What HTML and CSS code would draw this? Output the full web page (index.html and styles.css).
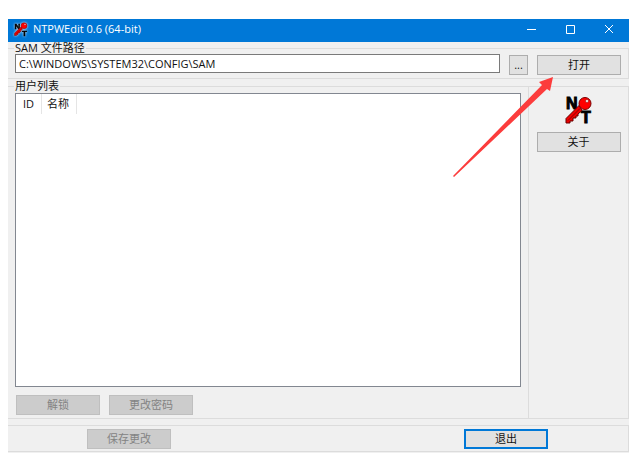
FILE: index.html
```
<!DOCTYPE html>
<html lang="zh-CN">
<head>
<meta charset="utf-8">
<title>NTPWEdit 0.6 (64-bit)</title>
<link rel="stylesheet" href="styles.css">
</head>
<body>
<svg class="defs" aria-hidden="true">
  <symbol id="key-logo" viewBox="0 0 28 28" overflow="visible">
    <text class="logo-letter" x="1" y="13">N</text>
    <text class="logo-letter" x="16" y="27">T</text>
    <path d="M14 9.500 L1 22.500 V27 H5 V25 H8 V22 H11 V20 H13 V18 L17 14.500 Z" fill="#f00000" stroke="#600" stroke-width="1"/>
    <path d="M3 24.500 L15 12.500" stroke="#800" stroke-width="1"/>
    <circle cx="20" cy="7.500" r="6" fill="#f00" stroke="#700" stroke-width="1"/>
    <circle cx="22" cy="5" r="1.500" fill="#fff" stroke="#700" stroke-width=".5"/>
  </symbol>
</svg>
<main class="window">
  <header class="titlebar">
    <svg class="title-icon"><use href="#key-logo"/></svg>
    <h1 class="title">NTPWEdit 0.6 (64-bit)</h1>
    <button class="caption" aria-label="最小化"><svg viewBox="0 0 10 10"><path d="M1 5.500H10"/></svg></button>
    <button class="caption" aria-label="最大化"><svg viewBox="0 0 10 10"><path d="M1.500 1.500H9.500V9.500H1.500Z"/></svg></button>
    <button class="caption" aria-label="关闭"><svg viewBox="0 0 10 10"><path d="M1 1L9 9M9 1L1 9"/></svg></button>
  </header>
  <fieldset class="group path-group">
    <legend><label for="path">SAM 文件路径</label></legend>
    <div class="path-row">
      <input id="path" class="path" type="text" value="C:\WINDOWS\SYSTEM32\CONFIG\SAM">
      <button class="btn browse">...</button>
      <button class="btn">打开</button>
    </div>
  </fieldset>
  <div class="content">
    <fieldset class="group users">
      <legend>用户列表</legend>
      <div class="list">
        <table>
          <thead><tr><th>ID</th><th>名称</th></tr></thead>
        </table>
      </div>
      <div class="actions">
        <button class="btn" disabled>解锁</button>
        <button class="btn" disabled>更改密码</button>
      </div>
    </fieldset>
    <aside class="side">
      <svg class="logo"><use href="#key-logo"/></svg>
      <button class="btn">关于</button>
    </aside>
  </div>
  <footer class="footer">
    <button class="btn" disabled>保存更改</button>
    <button class="btn default">退出</button>
  </footer>
  <svg class="arrow" viewBox="0 0 102 102" aria-hidden="true"><path d="M101 1L87 6L90 9L1 100L2 101L95 13L98 15Z"/></svg>
</main>
</body>
</html>
```
FILE: styles.css
```
* { box-sizing: border-box; }
body {
  margin: 19px 11px 0 8px;
  background: #fff;
  color: #111;
  font: 11px/12px "Open Sans", "Noto Sans CJK SC", sans-serif;
}
button, input { font: inherit; color: inherit; }
.defs { position: absolute; width: 0; height: 0; }
.logo-letter {
  font: bold 16px/16px "Liberation Sans", sans-serif;
  fill: #000;
  stroke: #000;
  stroke-width: 1px;
}
.window { position: relative; background: #f0f0f0; padding-bottom: 1px; }
.titlebar {
  display: flex;
  align-items: center;
  height: 23px;
  padding: 0 1px 4px 6px;
  background: #0078d7;
  color: #fff;
}
.title-icon { width: 14px; height: 14px; overflow: visible; filter: drop-shadow(0 0 1px #fff); }
.title { flex: 1; margin: 0 0 0 5px; font-size: 11px; font-weight: normal; }
.caption {
  display: flex;
  align-items: center;
  justify-content: center;
  width: 39px;
  height: 19px;
  padding: 0;
  border: 0;
  background: none;
}
.caption svg { width: 10px; height: 10px; fill: none; stroke: #fff; }
.group { min-width: 0; margin: 0; border: 1px solid #dcdcdc; padding: 0; }
legend { margin-left: -1px; padding: 0 1px; line-height: 12px; white-space: nowrap; }
.path-group { border-left: 0; padding: 0 7px 3px 7px; }
.path-row { display: flex; align-items: flex-start; }
.path {
  flex: 1;
  min-width: 0;
  height: 19px;
  margin-right: 9px;
  padding: 0 3px;
  border: 1px solid #7a7a7a;
  background: #fff;
}
.btn {
  width: 84px;
  height: 20px;
  padding: 0;
  border: 1px solid #adadad;
  background: #e1e1e1;
}
.path-row .btn { margin-top: 1px; }
.path-row .browse { width: 19px; margin-right: 9px; }
.btn:disabled { border-color: #bfbfbf; background: #ccc; color: #838383; }
.btn.default { border: 2px solid #0078d7; }
.content { display: flex; margin-top: 1px; }
.users { flex: 1; border-left: 0; padding: 0 7px 3px; }
.list { height: 294px; margin-top: 1px; border: 1px solid #828790; background: #fff; }
table { border-collapse: collapse; }
th {
  height: 20px;
  padding: 0 7px 0 5px;
  border-right: 1px solid #e5e5e5;
  font-weight: normal;
  text-align: left;
}
th:first-child { padding: 0 7px; }
.actions { display: flex; gap: 9px; margin: 8px 0 0 1px; }
.side {
  display: flex;
  flex-direction: column;
  align-items: center;
  width: 100px;
  margin-top: 6px;
  padding-top: 9px;
  border: 1px solid #dcdcdc;
  border-left: 0;
}
.logo { width: 28px; height: 28px; margin-bottom: 8px; overflow: visible; }
.footer {
  display: flex;
  justify-content: space-between;
  margin-top: 6px;
  padding: 3px 80px 2px 79px;
  border: 1px solid #dcdcdc;
  border-left: 0;
}
.arrow { position: absolute; top: 57px; right: 75px; width: 102px; height: 102px; fill: #fc3c3c; pointer-events: none; }
```
